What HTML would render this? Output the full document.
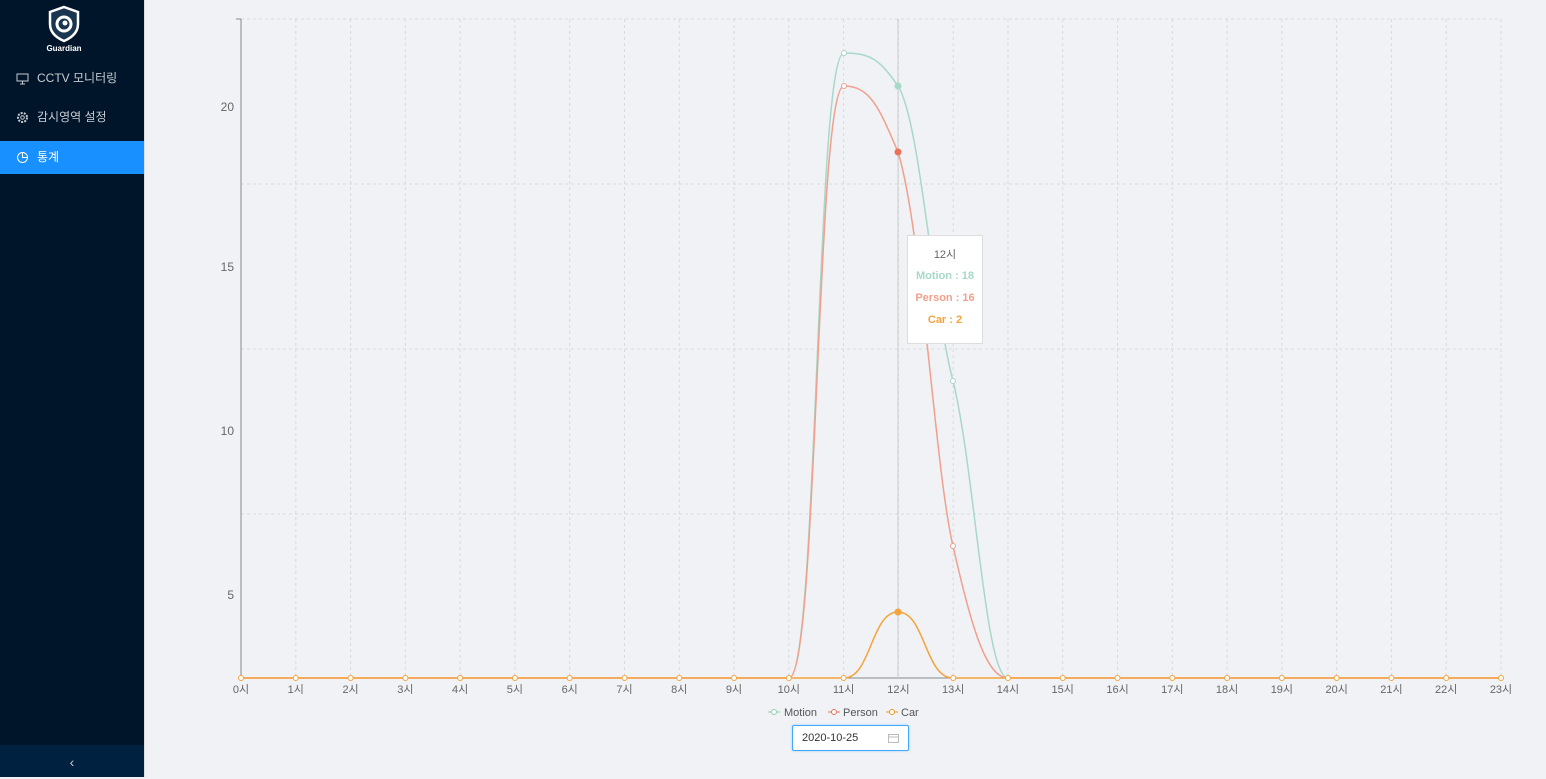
<!DOCTYPE html>
<html><head><meta charset="utf-8"><style>
body{margin:0;width:1546px;height:777px;overflow:hidden;background:#f0f2f5;font-family:"Liberation Sans","Noto Sans CJK KR",sans-serif;position:relative}
.side{position:absolute;left:0;top:0;width:144px;height:777px;background:#001529;border-right:1px solid #ddd}
.item{position:absolute;left:0;width:144px;height:33px;color:#c8ccd2;font-size:12px;line-height:33px}
.item span{position:absolute;left:37px}
.sel{background:#1890ff;color:#fff}
.bot{position:absolute;bottom:0;left:0;width:144px;height:32px;background:#002140;color:#ccc;text-align:center;line-height:34px;font-size:14px}
.tip{position:absolute;left:907px;top:235px;width:74px;height:107px;background:#fff;border:1px solid #ddd;font-size:11px;text-align:center}
.date{position:absolute;left:792px;top:725px;width:115px;height:24px;background:#fff;border:1px solid #40a9ff;border-radius:2px;font-size:11px;line-height:24px;color:#333;box-shadow:0 0 2px #9cd0ff}
</style></head><body>
<div class="side">
<svg style="position:absolute;left:47px;top:5px" width="34" height="38" viewBox="0 0 34 38"><path d="M17 2 L31 7 V19 C31 28 24 33 17 36 C10 33 3 28 3 19 V7 Z" fill="#1a3550" stroke="#fff" stroke-width="2.5"/><circle cx="17" cy="19" r="7" fill="none" stroke="#fff" stroke-width="3"/><circle cx="18" cy="18" r="2.5" fill="#fff"/></svg>
<div style="position:absolute;left:0;width:128px;top:44px;text-align:center;color:#fff;font-size:8px;font-weight:bold">Guardian</div>
<div class="item" style="top:62px"><svg style="position:absolute;left:16px;top:11px" width="13" height="12"><rect x="1" y="1" width="11" height="7" fill="none" stroke="#c8ccd2"/><path d="M4 11H9M6.5 8V11" stroke="#c8ccd2"/></svg><span>CCTV 모니터링</span></div>
<div class="item" style="top:101px"><svg style="position:absolute;left:16px;top:10px" width="13" height="13"><circle cx="6.5" cy="6.5" r="4.5" fill="none" stroke="#c8ccd2" stroke-dasharray="2 1.2" stroke-width="2"/><circle cx="6.5" cy="6.5" r="1.8" fill="none" stroke="#c8ccd2"/></svg><span>감시영역 설정</span></div>
<div class="item sel" style="top:141px"><svg style="position:absolute;left:16px;top:10px" width="13" height="13"><circle cx="6.5" cy="6.5" r="5" fill="none" stroke="#fff"/><path d="M6.5 1.5V6.5H11.5" fill="none" stroke="#fff"/></svg><span>통계</span></div>
<div class="bot">‹</div>
</div>
<svg style="position:absolute;left:0;top:0" width="1546" height="777">
<g stroke="#d9d9d9" stroke-dasharray="3 3" stroke-width="1">
<line x1="241" y1="19" x2="1501" y2="19"/><line x1="241" y1="184" x2="1501" y2="184"/><line x1="241" y1="349" x2="1501" y2="349"/><line x1="241" y1="514" x2="1501" y2="514"/>
</g>
<g stroke="#d9d9d9" stroke-dasharray="3 3" id="vg"></g>
<line x1="241" y1="19" x2="241" y2="678" stroke="#888"/>
<line x1="236" y1="19" x2="241" y2="19" stroke="#888"/>
<line x1="241" y1="678" x2="1501" y2="678" stroke="#888"/>
<line x1="898" y1="19" x2="898" y2="678" stroke="#ccc"/>
<g font-size="12" fill="#666" text-anchor="end" font-family="Liberation Sans"><text x="234" y="111">20</text><text x="234" y="271">15</text><text x="234" y="435">10</text><text x="234" y="599">5</text></g>
<g id="xl" font-size="11" fill="#666" text-anchor="middle" font-family="Liberation Sans,Noto Sans CJK KR,sans-serif"></g>
<path d="M789,678 C818,678 816,53 844,53 C871,53 880,60 898,86 C920,120 932,300 953,381 C975,470 985,678 1008,678" fill="none" stroke="#a8d8c8" stroke-width="1.5"/>
<path d="M241,678 H789 C818,678 816,86 844,86 C871,86 880,110 898,152 C922,230 935,470 953,546 C970,620 985,678 1008,678 H1501" fill="none" stroke="#f0a08c" stroke-width="1.5"/>
<path d="M241,678 H844 C871,678 871,612 898,612 C925,612 925,678 953,678 H1501" fill="none" stroke="#f5a33a" stroke-width="1.5"/>
<g fill="#fff" stroke-width="1"><circle cx="844" cy="53" r="2.5" stroke="#a8d8c8"/><circle cx="898" cy="86" r="3" fill="#a8d8c8" stroke="#a8d8c8"/><circle cx="953" cy="381" r="2.5" stroke="#a8d8c8"/><circle cx="844" cy="86" r="2.5" stroke="#f0a08c"/><circle cx="898" cy="152" r="3" fill="#e8735a" stroke="#e8735a"/><circle cx="953" cy="546" r="2.5" stroke="#f0a08c"/><circle cx="898" cy="612" r="3" fill="#f5a33a" stroke="#f5a33a"/></g>
<g id="dots" fill="#fff" stroke="#f5a33a"></g>
<g font-size="11" fill="#555" font-family="Liberation Sans">
<line x1="768" y1="712" x2="780" y2="712" stroke="#8fcfb0"/><circle cx="774" cy="712" r="2.5" fill="#fff" stroke="#8fcfb0"/><text x="784" y="716">Motion</text>
<line x1="828" y1="712" x2="840" y2="712" stroke="#e8735a"/><circle cx="834" cy="712" r="2.5" fill="#fff" stroke="#e8735a"/><text x="843" y="716">Person</text>
<line x1="886" y1="712" x2="898" y2="712" stroke="#f0961e"/><circle cx="892" cy="712" r="2.5" fill="#fff" stroke="#f0961e"/><text x="901" y="716">Car</text></g>
</svg>
<div class="tip"><div style="margin-top:10px;color:#666">12시</div><div style="margin-top:8px;color:#a8d8c8;font-weight:bold">Motion : 18</div><div style="margin-top:10px;color:#f0a08c;font-weight:bold">Person : 16</div><div style="margin-top:10px;color:#f5a33a;font-weight:bold">Car : 2</div></div>
<div class="date"><span style="margin-left:9px">2020-10-25</span><svg style="position:absolute;right:9px;top:7px" width="11" height="10"><rect x="0.5" y="1.5" width="10" height="8" fill="none" stroke="#bbb"/><line x1="0.5" y1="4" x2="10.5" y2="4" stroke="#bbb"/></svg></div>
<script>
var vg=document.getElementById('vg'),xl=document.getElementById('xl'),d=document.getElementById('dots'),ns='http://www.w3.org/2000/svg';
for(var i=0;i<24;i++){var x=241+i*(1260/23);
if(i>0){var l=document.createElementNS(ns,'line');l.setAttribute('x1',x);l.setAttribute('x2',x);l.setAttribute('y1',19);l.setAttribute('y2',678);vg.appendChild(l);}
var t=document.createElementNS(ns,'text');t.setAttribute('x',x);t.setAttribute('y',693);t.textContent=i+'시';xl.appendChild(t);
if(i!=12){var c=document.createElementNS(ns,'circle');c.setAttribute('cx',x);c.setAttribute('cy',678);c.setAttribute('r',2.5);d.appendChild(c);}}
</script>
</body></html>
